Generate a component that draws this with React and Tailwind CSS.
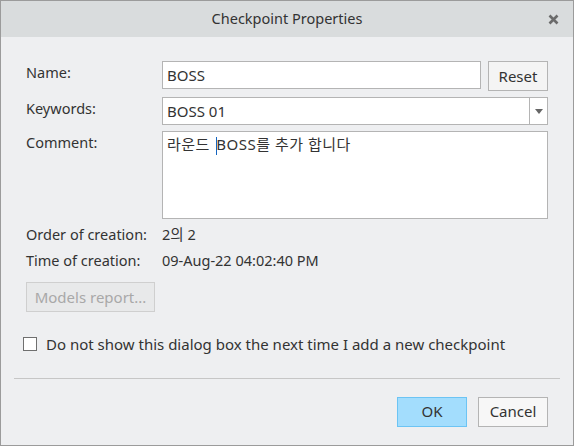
import React from "react";

const font = { fontFamily: '"Noto Sans", "Noto Sans CJK KR", sans-serif' };

export default function App() {
  return (
    <div className="w-[574px] h-[446px] bg-[#eeeff1] border border-[#9b9b9b] flex flex-col text-[#333] text-[14.5px]" style={font}>
      <div className="h-[36px] bg-[#d9dcdd] flex items-center justify-center relative shrink-0">
        <span className="text-[14.5px] text-[#333]">Checkpoint Properties</span>
        <svg className="absolute right-[14px] top-[13px]" width="11" height="11" viewBox="0 0 11 11">
          <path d="M1.5 1.5 L9.5 9.5 M9.5 1.5 L1.5 9.5" stroke="#6b6b6b" strokeWidth="2.6" strokeLinecap="butt" />
        </svg>
      </div>
      <div className="flex flex-col pl-[25px] pr-[25px] pt-[24px]">
        <div className="flex items-start h-[30px]">
          <div className="w-[136px] pt-[1px]">Name:</div>
          <div className="flex-1 h-[28px] bg-white border border-[#b4b4b4] px-[4px] flex items-center text-[15px]">BOSS</div>
          <div className="ml-[7px] w-[60px] h-[30px] bg-[#f4f4f4] border border-[#b4b4b4] flex items-center justify-center text-[15px]">Reset</div>
        </div>
        <div className="flex items-start mt-[6px]">
          <div className="w-[136px] pt-[1px]">Keywords:</div>
          <div className="flex-1 h-[28px] bg-white border border-[#b4b4b4] flex items-stretch text-[15px]">
            <div className="flex-1 px-[4px] flex items-center">BOSS 01</div>
            <div className="w-[18px] border-l border-[#b4b4b4] flex items-center justify-center">
              <svg width="8" height="5" viewBox="0 0 8 5"><path d="M0 0 H8 L4 5 Z" fill="#666" /></svg>
            </div>
          </div>
        </div>
        <div className="flex items-start mt-[6px]">
          <div className="w-[136px] pt-[1px]">Comment:</div>
          <div className="flex-1 h-[88px] bg-white border border-[#b4b4b4] px-[4px] pt-[1px] text-[15px] tracking-[0.5px]">
            <span>라운드 </span><span className="inline-block w-[1px] h-[18px] bg-[#1565c0] align-middle ml-[2px] -mr-[1px]"></span><span>BOSS를 추가 합니다</span>
          </div>
        </div>
        <div className="flex mt-[3px] h-[26px] items-center">
          <div className="w-[136px]">Order of creation:</div>
          <div>2의 2</div>
        </div>
        <div className="flex h-[26px] items-center">
          <div className="w-[136px]">Time of creation:</div>
          <div>09-Aug-22 04:02:40 PM</div>
        </div>
        <div className="mt-[8px]">
          <div className="w-[129px] h-[30px] bg-[#e8e9ea] border border-[#cfcfcf] flex items-center justify-center text-[#a8a8a8] text-[15px]">Models report...</div>
        </div>
        <div className="flex items-center mt-[21px] -ml-[3px]">
          <div className="w-[14px] h-[14px] bg-white border border-[#6f6f6f]"></div>
          <span className="ml-[9px] text-[15px]">Do not show this dialog box the next time I add a new checkpoint</span>
        </div>
      </div>
      <div className="mx-[13px] mt-[22px] h-[1px] bg-[#c6c6c6]"></div>
      <div className="flex justify-end pr-[25px] mt-[18px] gap-[11px]">
        <div className="w-[70px] h-[30px] bg-[#a3ddfd] border border-[#6cc4f4] flex items-center justify-center text-[15px]">OK</div>
        <div className="w-[70px] h-[30px] bg-[#f7f7f7] border border-[#b4b4b4] flex items-center justify-center text-[15px]">Cancel</div>
      </div>
    </div>
  );
}
